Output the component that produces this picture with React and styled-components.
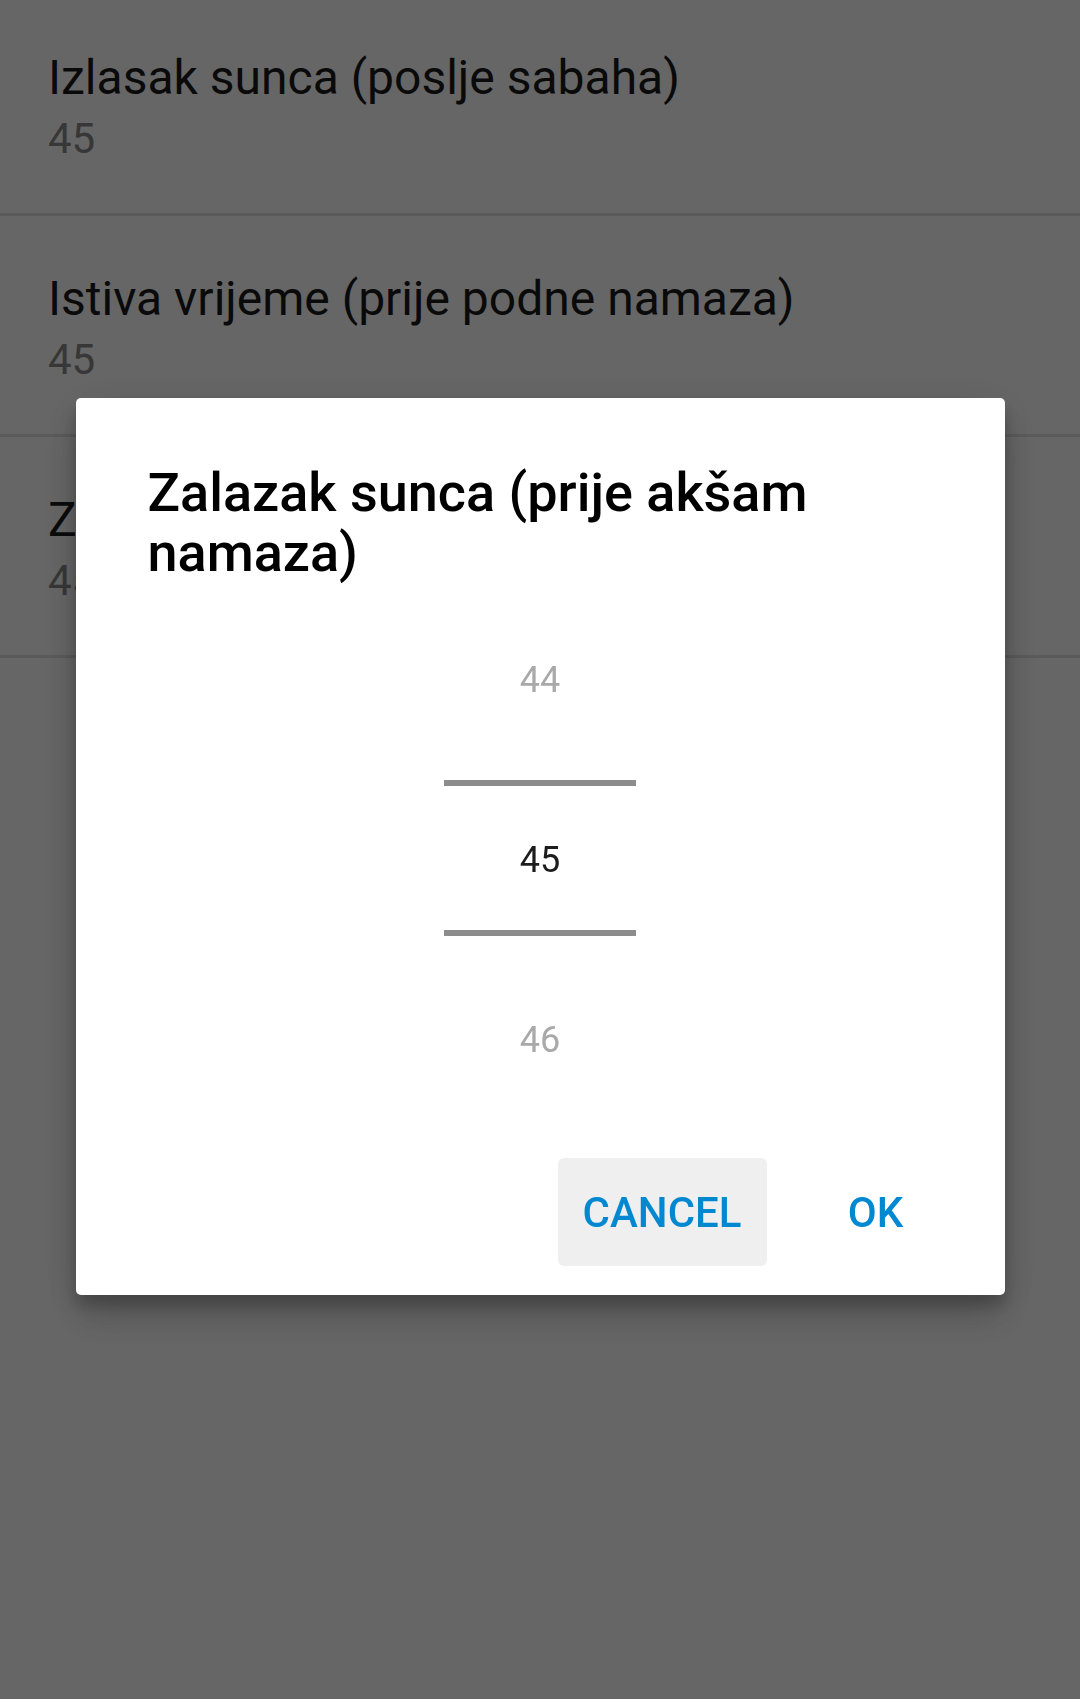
import React from 'react'
import styled, { createGlobalStyle } from 'styled-components'

const offsets = [
  { id: 1, title: 'Izlasak sunca (poslje sabaha)', value: 45 },
  { id: 2, title: 'Istiva vrijeme (prije podne namaza)', value: 45 },
  { id: 3, title: 'Zalazak sunca (prije akšam namaza)', value: 45 }
]

export default function App () {
  const selected = 45

  return (
    <>
      <GlobalStyle />
      <List>
        {offsets.map(({ id, title, value }) => (
          <Row key={id}>
            <RowTitle>{title}</RowTitle>
            <RowValue>{value}</RowValue>
          </Row>
        ))}
      </List>
      <Scrim>
        <Dialog>
          <DialogTitle>Zalazak sunca (prije akšam namaza)</DialogTitle>
          <Wheel>
            <WheelItem>{selected - 1}</WheelItem>
            <WheelItem active>{selected}</WheelItem>
            <WheelItem>{selected + 1}</WheelItem>
          </Wheel>
          <Actions>
            <TextButton pressed>Cancel</TextButton>
            <TextButton>OK</TextButton>
          </Actions>
        </Dialog>
      </Scrim>
    </>
  )
}

const GlobalStyle = createGlobalStyle`
  html, body {
    margin: 0;
    background: #fff;
    font-family: Roboto, 'Noto Sans', sans-serif;
  }
`

// list is scrolled a few pixels, so the first row starts above the top edge
const List = styled.ul`
  margin: -5px 0 0;
  padding: 0;
  list-style: none;
`

const Row = styled.li`
  box-sizing: border-box;
  height: 221px;
  padding: 55px 48px 0;
  border-bottom: 3px solid #e2e2e2;
`

const RowTitle = styled.div`
  font-size: 48px;
  line-height: 56px;
  color: #1a1a1a;
  white-space: nowrap;
`

const RowValue = styled.div`
  margin-top: 8px;
  font-size: 42px;
  line-height: 50px;
  color: #8a8a8a;
`

const Scrim = styled.div`
  position: fixed;
  inset: 0;
  background: rgba(0, 0, 0, .6);
  display: flex;
  align-items: center;
  justify-content: center;
`

const Dialog = styled.div`
  box-sizing: border-box;
  width: 929px;
  margin-bottom: 6px;
  padding: 65px 0 29px;
  background: #fff;
  border-radius: 5px;
  box-shadow: 0 24px 38px rgba(0, 0, 0, .14), 0 9px 46px rgba(0, 0, 0, .12), 0 11px 15px rgba(0, 0, 0, .2);
`

const DialogTitle = styled.h2`
  margin: 0;
  padding: 0 72px;
  font-size: 54px;
  line-height: 60px;
  font-weight: 500;
  color: #000;
`

const Wheel = styled.div`
  margin-top: 7px;
  display: flex;
  flex-direction: column;
  align-items: center;
`

const WheelItem = styled.div`
  box-sizing: border-box;
  width: 192px;
  height: ${({ active }) => (active ? '156px' : '180px')};
  margin: ${({ active }) => (active ? '10px 0 14px' : '0')};
  padding-top: ${({ active }) => (active ? '4px' : '0')};
  display: flex;
  align-items: center;
  justify-content: center;
  font-size: 36px;
  color: ${({ active }) => (active ? '#1c1c1c' : '#a9a9a9')};
  border-top: ${({ active }) => (active ? '6px solid #8c8c8c' : 'none')};
  border-bottom: ${({ active }) => (active ? '6px solid #8c8c8c' : 'none')};
`

const Actions = styled.div`
  margin-top: 28px;
  padding-right: 33px;
  display: flex;
  justify-content: flex-end;
  gap: 13px;
`

const TextButton = styled.button`
  min-width: 192px;
  height: 108px;
  padding: 0 25px;
  border: none;
  border-radius: 6px;
  background: ${({ pressed }) => (pressed ? '#efefef' : 'transparent')};
  font-family: inherit;
  font-size: 42px;
  font-weight: 500;
  text-transform: uppercase;
  color: #0288d1;
`
